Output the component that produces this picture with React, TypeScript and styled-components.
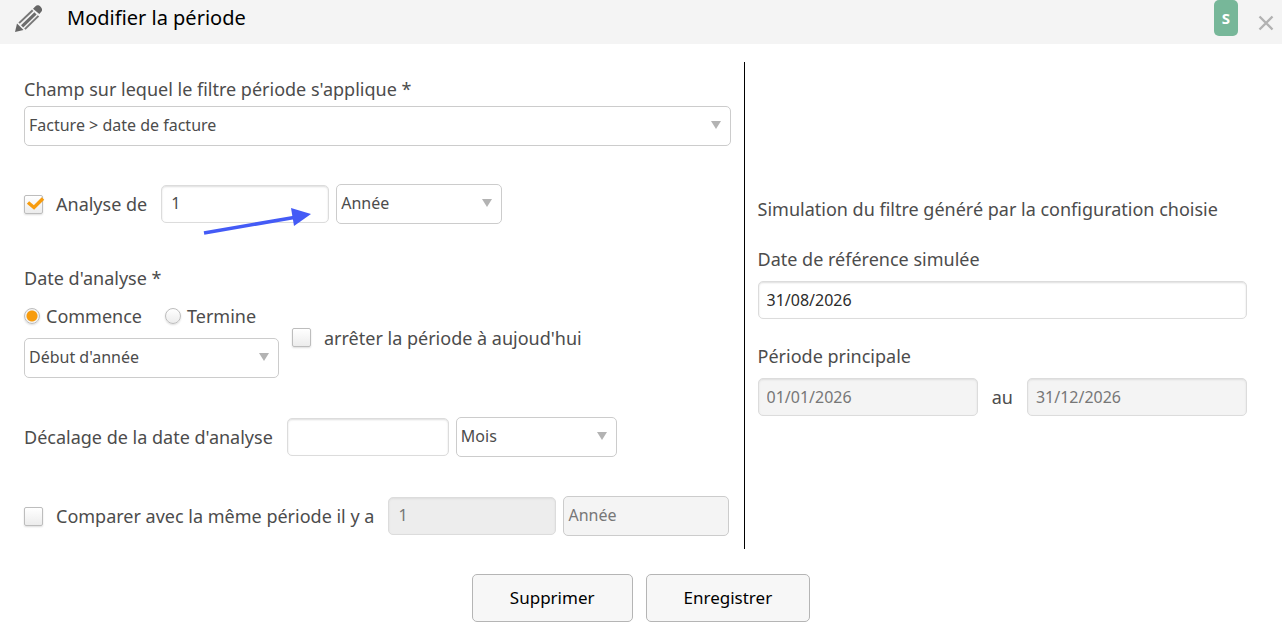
import React, { useState } from "react";
import type { SelectHTMLAttributes } from "react";
import styled, { createGlobalStyle, css } from "styled-components";

const GlobalStyle = createGlobalStyle`
  *, *::before, *::after { box-sizing: border-box; }
  body {
    margin: 0;
    background: #fff;
    color: #4c4c4c;
    font-family: "Noto Sans", "Open Sans", sans-serif;
    font-size: 18px;
    line-height: 24px;
  }
  input, select, button { font-family: inherit; margin: 0; }
`;

const Header = styled.header`
  display: flex;
  align-items: center;
  height: 44px;
  padding: 0 7px 8px 14px;
  background: #f4f4f4;
`;

const PencilIcon = styled.svg`
  width: 29px;
  height: 29px;
  flex: none;
`;

const Title = styled.h1`
  flex: 1;
  margin: 0;
  padding-left: 24px;
  color: #000;
  font-size: 20px;
  font-weight: 400;
`;

const Badge = styled.span`
  width: 24px;
  height: 36px;
  border-radius: 5px;
  background: #77b799;
  color: #fff;
  font-size: 15px;
  font-weight: 700;
  line-height: 36px;
  text-align: center;
`;

const CloseButton = styled.button`
  display: flex;
  margin-left: 19px;
  padding: 10px 0 0;
  border: 0;
  background: none;
  color: #b2b2b2;
`;

const Body = styled.div`
  display: grid;
  grid-template-columns: 58fr 42fr;
  margin-top: 18px;
`;

const Settings = styled.section`
  display: flex;
  flex-direction: column;
  padding: 15px 13px 13px 24px;
`;

const Simulation = styled.section`
  display: flex;
  flex-direction: column;
  justify-content: center;
  padding: 2px 35px 0 13px;
  border-left: 1px solid #000;
`;

const Row = styled.div<{ $top?: number; $gap?: number }>`
  display: flex;
  align-items: center;
  gap: ${(p) => p.$gap ?? 7}px;
  margin-top: ${(p) => p.$top ?? 0}px;
`;

const Caption = styled.label`
  display: block;
`;

const InlineLabel = styled.label`
  margin-right: 7px;
  white-space: nowrap;
`;

const Paragraph = styled.p`
  margin: 0;
`;

const Fieldset = styled.fieldset`
  margin: 42px 0 0;
  padding: 0;
  border: 0;
  min-width: 0;
`;

const Legend = styled.legend`
  padding: 0;
`;

const StartBlock = styled.div`
  width: 255px;
`;

const StopToday = styled.div`
  display: flex;
  align-items: center;
  padding-bottom: 7px;
`;

const TextInput = styled.input<{ $width?: string }>`
  display: block;
  width: ${(p) => p.$width ?? "100%"};
  min-width: 0;
  height: 38px;
  padding: 0 9px 2px;
  border: 1px solid #dcdcdc;
  border-radius: 5px;
  background: #fff;
  box-shadow: inset 0 1px 2px #ddd;
  color: #4c4c4c;
  font-size: 16px;
  &:disabled {
    background: #ededed;
    color: #777;
  }
`;

const DateInput = styled(TextInput)`
  padding: 0 8px;
  color: #2c2c2c;
  &:disabled {
    background: #f4f4f4;
  }
`;

const SelectBox = styled.span<{ $width: string }>`
  display: grid;
  align-items: center;
  width: ${(p) => p.$width};
  min-width: 0;
`;

const NativeSelect = styled.select`
  grid-area: 1 / 1;
  width: 100%;
  height: 40px;
  padding: 0 28px 3px 4px;
  border: 1px solid #ccc;
  border-radius: 5px;
  appearance: none;
  background: #fff;
  color: #4c4c4c;
  font-size: 16px;
  &:disabled {
    background: #f4f4f4;
    color: #777;
    opacity: 1;
  }
`;

const Caret = styled.svg`
  grid-area: 1 / 1;
  justify-self: end;
  width: 10px;
  height: 8px;
  margin: 0 10px 2px 0;
  pointer-events: none;
`;

const tickSurface = css`
  flex: none;
  appearance: none;
  border: 1px solid #bdbdbd;
  background: linear-gradient(#fff, #ececec);
  box-shadow: 0 1px 2px #ddd;
`;

const TickBox = styled.input.attrs({ type: "checkbox" })`
  ${tickSurface}
  grid-area: 1 / 1;
  width: 19px;
  height: 19px;
  border-radius: 2px;
`;

const TickFrame = styled.span`
  display: grid;
  margin-right: 6px;
  place-items: center;
`;

const TickMark = styled.svg`
  grid-area: 1 / 1;
  width: 18px;
  height: 18px;
  overflow: visible;
  pointer-events: none;
`;

const RadioDot = styled.input.attrs({ type: "radio" })`
  ${tickSurface}
  width: 16px;
  height: 16px;
  border-radius: 50%;
  &:checked {
    background: radial-gradient(circle, #f79c0e 5px, #f4f4f4 6px);
  }
`;

const RadioLabel = styled.label`
  display: flex;
  align-items: center;
  gap: 6px;
`;

const PointedField = styled.div`
  position: relative;
  width: 168px;
`;

const Pointer = styled.svg`
  position: absolute;
  left: 41px;
  top: 19px;
  width: 112px;
  height: 34px;
  pointer-events: none;
`;

const Footer = styled.footer`
  display: flex;
  justify-content: center;
  gap: 13px;
  padding: 25px 0 7px;
`;

const ActionButton = styled.button`
  height: 48px;
  padding: 0 37px 1px;
  border: 1px solid #b5b5b5;
  border-radius: 5px;
  background: #f7f7f7;
  color: #000;
  font-size: 17px;
  font-weight: 400;
`;

type PickerProps = SelectHTMLAttributes<HTMLSelectElement> & {
  boxWidth: string;
  options: string[];
};

function Picker({ boxWidth, options, ...rest }: PickerProps) {
  return (
    <SelectBox $width={boxWidth}>
      <NativeSelect {...rest}>
        {options.map((o) => (
          <option key={o}>{o}</option>
        ))}
      </NativeSelect>
      {!rest.disabled && (
        <Caret viewBox="0 0 10 8" aria-hidden="true">
          <path d="M0 0h10L5 8z" fill="#b3b3b3" />
        </Caret>
      )}
    </SelectBox>
  );
}

function Tick({ id, initial = false }: { id: string; initial?: boolean }) {
  const [on, setOn] = useState(initial);
  return (
    <TickFrame>
      <TickBox id={id} checked={on} onChange={() => setOn(!on)} />
      {on && (
        <TickMark viewBox="0 0 18 18" aria-hidden="true">
          <path d="M3 7.500l6 5 9-9" fill="none" stroke="#f79c0e" strokeWidth="3.500" />
        </TickMark>
      )}
    </TickFrame>
  );
}

export default function App() {
  return (
    <>
      <GlobalStyle />
      <Header>
        <PencilIcon viewBox="0 0 29 29" aria-hidden="true">
          <path d="M1 28l2-8.500 6.500 6.500z" fill="#666" />
          <path d="M4.400 18.400L18 5.600l1.400 1.400L5.800 19.800z" fill="#777" />
          <path d="M7 21.200L20.400 8.200l2.200 2.200L9.200 23.400z" fill="#6c6c6c" />
          <path d="M10.200 24.400L23.800 11.200l1.400 1.400-13.600 13.200z" fill="#777" />
          <path d="M19 4.700l2.500-2.500c1.300-1.400 3.500-1.100 5.100.5s2 3.700.7 5l-2 2.200z" fill="#666" />
        </PencilIcon>
        <Title>Modifier la période</Title>
        <Badge>S</Badge>
        <CloseButton type="button" aria-label="Fermer">
          <svg width="18" height="18" viewBox="0 0 18 18" aria-hidden="true">
            <path d="M2.500 2.500l13 13m0-13l-13 13" stroke="currentColor" strokeWidth="2.400" />
          </svg>
        </CloseButton>
      </Header>

      <Body>
        <Settings>
          <Caption htmlFor="champ">Champ sur lequel le filtre période s'applique *</Caption>
          <Row $top={5}>
            <Picker id="champ" boxWidth="100%" options={["Facture > date de facture"]} />
          </Row>

          <Row $top={38}>
            <Tick id="analyse" initial />
            <InlineLabel htmlFor="analyse">Analyse de</InlineLabel>
            <PointedField>
              <TextInput aria-label="Durée d'analyse" defaultValue="1" />
              <Pointer viewBox="0 0 112 34" aria-hidden="true">
                <path d="M2 29L92 13.500" stroke="#445bf6" strokeWidth="3.500" />
                <path d="M89 4l20 6-17 12z" fill="#445bf6" />
              </Pointer>
            </PointedField>
            <Picker aria-label="Unité d'analyse" boxWidth="166px" options={["Année", "Mois"]} />
          </Row>

          <Fieldset>
            <Legend>Date d'analyse *</Legend>
            <Row $top={14} $gap={13}>
              <StartBlock>
                <Row $gap={23}>
                  <RadioLabel>
                    <RadioDot name="ancre" defaultChecked />
                    Commence
                  </RadioLabel>
                  <RadioLabel>
                    <RadioDot name="ancre" />
                    Termine
                  </RadioLabel>
                </Row>
                <Row $top={10}>
                  <Picker
                    aria-label="Position de la date"
                    boxWidth="100%"
                    options={["Début d'année", "Début de mois"]}
                  />
                </Row>
              </StartBlock>
              <StopToday>
                <Row>
                  <Tick id="arret" />
                  <InlineLabel htmlFor="arret">arrêter la période à aujoud'hui</InlineLabel>
                </Row>
              </StopToday>
            </Row>
          </Fieldset>

          <Row $top={39}>
            <InlineLabel htmlFor="decalage">Décalage de la date d'analyse</InlineLabel>
            <TextInput id="decalage" $width="162px" />
            <Picker aria-label="Unité de décalage" boxWidth="161px" options={["Mois", "Année"]} />
          </Row>

          <Row $top={39}>
            <Tick id="comparer" />
            <InlineLabel htmlFor="comparer">Comparer avec la même période il y a</InlineLabel>
            <TextInput aria-label="Écart de comparaison" defaultValue="1" $width="168px" disabled />
            <Picker aria-label="Unité de comparaison" boxWidth="166px" options={["Année"]} disabled />
          </Row>
        </Settings>

        <Simulation>
          <Paragraph>Simulation du filtre généré par la configuration choisie</Paragraph>
          <Row $top={26}>
            <Caption htmlFor="reference">Date de référence simulée</Caption>
          </Row>
          <Row $top={10}>
            <DateInput id="reference" defaultValue="31/08/2026" />
          </Row>
          <Row $top={25}>
            <Caption htmlFor="debut">Période principale</Caption>
          </Row>
          <Row $top={10} $gap={14}>
            <DateInput id="debut" defaultValue="01/01/2026" disabled />
            <Caption htmlFor="fin">au</Caption>
            <DateInput id="fin" defaultValue="31/12/2026" disabled />
          </Row>
        </Simulation>
      </Body>

      <Footer>
        <ActionButton type="button">Supprimer</ActionButton>
        <ActionButton type="button">Enregistrer</ActionButton>
      </Footer>
    </>
  );
}
